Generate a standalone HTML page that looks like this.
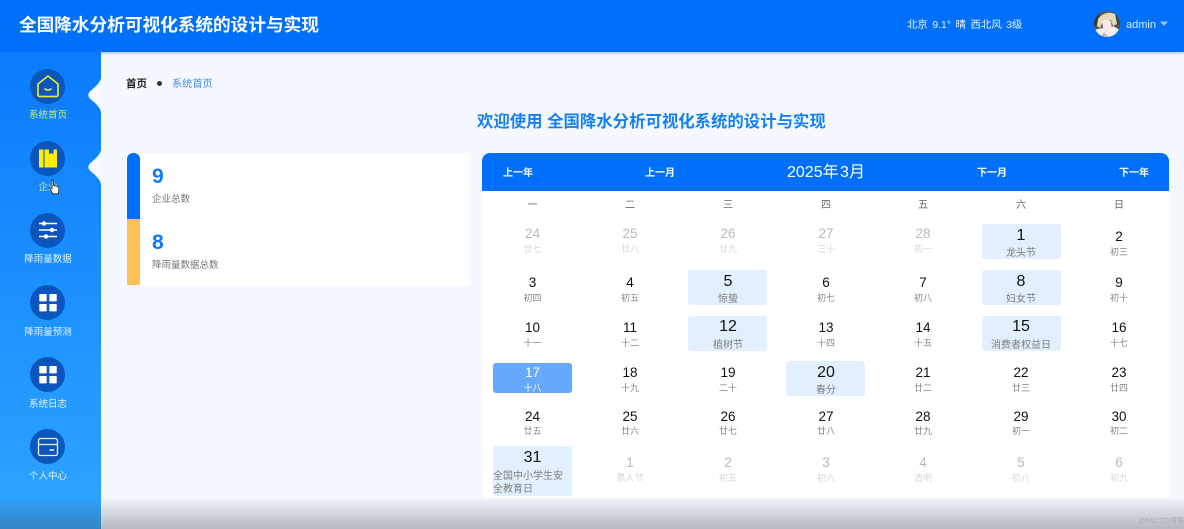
<!DOCTYPE html>
<html lang="zh"><head><meta charset="utf-8"><title>全国降水分析可视化系统的设计与实现</title>
<style>
*{margin:0;padding:0;box-sizing:border-box}
html,body{width:1184px;height:529px;overflow:hidden;background:#f5f9ff}
body{position:relative;font-family:"Liberation Sans","Noto Sans CJK SC",sans-serif;filter:blur(.35px)}
div,span,svg{position:absolute}
.hd{left:0;top:0;width:1184px;height:52px;background:#0070fb;box-shadow:0 1px 3px rgba(0,60,140,.35)}
.side{left:0;top:52px;width:101px;height:477px;background:linear-gradient(180deg,#0a7bfd,#2fa5ff)}
.ci{left:30px;width:35px;height:35px;border-radius:50%;background:#0a56bd}
.lb{left:0;width:96px;margin-top:2px;text-align:center;font-size:9.5px;line-height:14px;color:#e4f1ff;white-space:nowrap}
.n,.s,.w,.b{width:80px;text-align:center;white-space:nowrap}
.n{font-size:13.5px;line-height:20px;color:#111;margin-top:.5px}
.s{font-size:9px;line-height:14px;color:#858585;margin-top:.6px}
.w{font-size:10px;line-height:14px;color:#666;top:199px}
.g{color:#b9b9b9}.sg{color:#d6d6d6}
.big{font-size:16px;margin-top:1px}.hs{color:#7d7d7d;font-size:10px;margin-top:1.7px}
.b{background:#e2effe;border-radius:3px;width:79px;height:35px}
.c1{left:492.5px}.c2{left:590px}.c3{left:688px}.c4{left:786px}.c5{left:883px}.c6{left:981px}.c7{left:1079px}
.nav{top:166px;font-size:10px;line-height:16px;font-weight:700;color:#fff;white-space:nowrap}
</style></head><body>

<div class="hd"></div>
<span style="left:19px;top:12px;font-size:17.65px;line-height:26px;font-weight:700;color:#fff;white-space:nowrap">全国降水分析可视化系统的设计与实现</span>
<span style="left:907px;top:18px;font-size:10.4px;line-height:15px;color:#e8f2ff;white-space:pre;word-spacing:-.6px">北京  9.1°  晴  西北风  3级</span>
<svg style="left:1094px;top:11px" width="26" height="26" viewBox="0 0 26 26"><defs><clipPath id="av"><circle cx="13" cy="13" r="13"/></clipPath></defs><g clip-path="url(#av)"><rect width="26" height="26" fill="#5b5250"/><path d="M0 0h6L3 12 0 17z" fill="#3a3532"/><path d="M21 0h5v15l-4-3z" fill="#4a4542"/><path d="M4 8Q11-1 21 3L23 13 19 15 17 9 9 10 6 17 3 15z" fill="#e4d9bd"/><path d="M8 10Q14 8 17 10L18 18 13 21 9 18z" fill="#f5ebe2"/><path d="M0 26V19L8 17 13 21 19 15 26 19V26z" fill="#f0eff3"/><path d="M10 21l5 5H7z" fill="#c9b8c4"/></g></svg>
<span style="left:1126px;top:17px;font-size:11px;line-height:16px;color:#dcebff">admin</span>
<svg style="left:1160px;top:21px" width="8" height="6"><path d="M0 .5h8L4 5z" fill="#9fc8ff"/></svg>

<div class="side"></div>
<svg style="left:86px;top:78px" width="15" height="34" viewBox="0 0 15 34"><path d="M15 0C14 5 9 9 5 12.500C1.500 15 1.500 19 5 21.500C9 25 14 29 15 34z" fill="#f8fbff"/></svg>
<svg style="left:86px;top:150px" width="15" height="34" viewBox="0 0 15 34"><path d="M15 0C14 5 9 9 5 12.500C1.500 15 1.500 19 5 21.500C9 25 14 29 15 34z" fill="#f8fbff"/></svg>

<div class="ci" style="top:68.5px"></div>
<svg style="left:30px;top:68.5px" width="35" height="35" viewBox="0 0 35 35" fill="none" stroke="#e2ec2e" stroke-width="1.700"><path d="M18 7 8 15V26a1.500 1.500 0 0 0 1.500 1.500h17A1.500 1.500 0 0 0 28 26V15z" stroke-linejoin="round"/><path d="M15 20q3 2 6 0" stroke-linecap="round"/></svg>
<div class="lb" style="top:107px;color:#cdee66">系统首页</div>

<div class="ci" style="top:140.5px"></div>
<svg style="left:30px;top:140.5px" width="35" height="35" viewBox="0 0 35 35"><path d="M9 8.500h4.500v18H9zM14.500 8.500H19V13.500l2.200-1.600L23.500 13.500V8.500H27v18H14.500z" fill="#ffee00"/></svg>
<div class="lb" style="top:179px;color:#cdee66">企业</div>

<div class="ci" style="top:212.5px"></div>
<svg style="left:30px;top:212.500px" width="35" height="35" viewBox="0 0 35 35" stroke="#fff" stroke-width="1.600" fill="#fff"><path d="M9 10.500h18M9 17h18M9 23.500h18"/><circle cx="14" cy="10.500" r="1.400"/><circle cx="22" cy="17" r="1.400"/><circle cx="16" cy="23.500" r="1.400"/></svg>
<div class="lb" style="top:251px">降雨量数据</div>

<div class="ci" style="top:284.5px"></div>
<svg style="left:30px;top:284.500px" width="35" height="35" viewBox="0 0 35 35" fill="#fff"><rect x="9.300" y="9" width="7.400" height="7.400" rx=".6"/><rect x="19.300" y="9" width="7.400" height="7.400" rx=".6"/><rect x="9.300" y="19" width="7.400" height="7.400" rx=".6"/><rect x="19.300" y="19" width="7.400" height="7.400" rx=".6"/></svg>
<div class="lb" style="top:324px">降雨量预测</div>

<div class="ci" style="top:356.5px"></div>
<svg style="left:30px;top:356.500px" width="35" height="35" viewBox="0 0 35 35" fill="#fff"><rect x="9.300" y="9" width="7.400" height="7.400" rx=".6"/><rect x="19.300" y="9" width="7.400" height="7.400" rx=".6"/><rect x="9.300" y="19" width="7.400" height="7.400" rx=".6"/><rect x="19.300" y="19" width="7.400" height="7.400" rx=".6"/></svg>
<div class="lb" style="top:396px">系统日志</div>

<div class="ci" style="top:428.5px"></div>
<svg style="left:30px;top:428.500px" width="35" height="35" viewBox="0 0 35 35" fill="none" stroke="#e8f2ff" stroke-width="1.300"><rect x="8.500" y="9.500" width="19" height="17" rx="2"/><path d="M8.500 15.500h19"/><path d="M19.500 21h4.500" stroke-width="1.500"/></svg>
<div class="lb" style="top:468px">个人中心</div>

<svg style="left:49px;top:179px" width="11" height="16" viewBox="0 0 11 16"><path d="M2.500 1.200C3.400.4 4.300 1 4.300 2V6.500L8.800 7.500C9.800 7.900 10 8.800 9.900 10L9.200 14.800H3.800L1 9.600C.7 8.800 1.500 8.200 2.400 9L3 9.800V2z" fill="#fff" stroke="#222" stroke-width=".8"/></svg>

<span style="left:126px;top:76px;font-size:10.500px;line-height:16px;font-weight:700;color:#222">首页</span>
<div style="left:157px;top:81px;width:5px;height:5px;border-radius:50%;background:#333"></div>
<span style="left:172px;top:77px;font-size:10.200px;line-height:16px;color:#3f8de0">系统首页</span>

<span style="left:477px;top:110px;font-size:16.400px;line-height:24px;font-weight:700;color:#1480f5;white-space:nowrap">欢迎使用 全国降水分析可视化系统的设计与实现</span>

<div style="left:127px;top:153px;width:343px;height:133px;background:#fff"></div>
<div style="left:127px;top:153px;width:12.500px;height:66px;background:#0070fb;border-radius:6px 6px 0 0"></div>
<div style="left:127px;top:219px;width:12.500px;height:66px;background:#fdc155"></div>
<span style="left:152px;top:163px;font-size:21px;line-height:28px;font-weight:700;color:#0f7af5">9</span>
<span style="left:152px;top:192px;font-size:9.500px;line-height:15px;color:#777">企业总数</span>
<span style="left:152px;top:229px;font-size:21px;line-height:28px;font-weight:700;color:#0f7af5">8</span>
<span style="left:152px;top:258px;font-size:9.500px;line-height:15px;color:#777">降雨量数据总数</span>

<div style="left:482px;top:153px;width:687px;height:346px;background:#fff;border-radius:8px 8px 0 0"></div>
<div style="left:482px;top:153px;width:687px;height:38px;background:#0070fb;border-radius:8px 8px 0 0"></div>
<span class="nav" style="left:503px">上一年</span>
<span class="nav" style="left:645px">上一月</span>
<span style="left:787px;top:161px;font-size:16px;line-height:24px;color:#fff;white-space:nowrap;word-spacing:-3px">2025年 3月</span>
<span class="nav" style="left:977px">下一月</span>
<span class="nav" style="left:1119px">下一年</span>

<div class="w c1">一</div><div class="w c2">二</div><div class="w c3">三</div><div class="w c4">四</div><div class="w c5">五</div><div class="w c6">六</div><div class="w c7">日</div>

<!-- highlight boxes -->
<div class="b" style="left:982px;top:224px"></div>
<div class="b" style="left:688px;top:270px"></div>
<div class="b" style="left:982px;top:270px"></div>
<div class="b" style="left:688px;top:316px"></div>
<div class="b" style="left:982px;top:316px"></div>
<div class="b" style="left:493px;top:363px;height:30px;background:#66a9fc"></div>
<div class="b" style="left:786px;top:361px"></div>
<div class="b" style="left:493px;top:446px;height:50px"></div>

<!-- row 1 -->
<div class="n g c1" style="top:223px">24</div><div class="s sg c1" style="top:241px">廿七</div>
<div class="n g c2" style="top:223px">25</div><div class="s sg c2" style="top:241px">廿八</div>
<div class="n g c3" style="top:223px">26</div><div class="s sg c3" style="top:241px">廿九</div>
<div class="n g c4" style="top:223px">27</div><div class="s sg c4" style="top:241px">三十</div>
<div class="n g c5" style="top:223px">28</div><div class="s sg c5" style="top:241px">初一</div>
<div class="n big c6" style="top:225px">1</div><div class="s hs c6" style="top:245px">龙头节</div>
<div class="n c7" style="top:226px">2</div><div class="s c7" style="top:244px">初三</div>
<!-- row 2 -->
<div class="n c1" style="top:272px">3</div><div class="s c1" style="top:290px">初四</div>
<div class="n c2" style="top:272px">4</div><div class="s c2" style="top:290px">初五</div>
<div class="n big c3" style="top:271px">5</div><div class="s hs c3" style="top:291px">惊蛰</div>
<div class="n c4" style="top:272px">6</div><div class="s c4" style="top:290px">初七</div>
<div class="n c5" style="top:272px">7</div><div class="s c5" style="top:290px">初八</div>
<div class="n big c6" style="top:271px">8</div><div class="s hs c6" style="top:291px">妇女节</div>
<div class="n c7" style="top:272px">9</div><div class="s c7" style="top:290px">初十</div>
<!-- row 3 -->
<div class="n c1" style="top:317px">10</div><div class="s c1" style="top:335px">十一</div>
<div class="n c2" style="top:317px">11</div><div class="s c2" style="top:335px">十二</div>
<div class="n big c3" style="top:316px">12</div><div class="s hs c3" style="top:337px">植树节</div>
<div class="n c4" style="top:317px">13</div><div class="s c4" style="top:335px">十四</div>
<div class="n c5" style="top:317px">14</div><div class="s c5" style="top:335px">十五</div>
<div class="n big c6" style="top:316px">15</div><div class="s hs c6" style="top:337px">消费者权益日</div>
<div class="n c7" style="top:317px">16</div><div class="s c7" style="top:335px">十七</div>
<!-- row 4 -->
<div class="n c1" style="top:362px;color:#fff">17</div><div class="s c1" style="top:380px;color:#fff">十八</div>
<div class="n c2" style="top:362px">18</div><div class="s c2" style="top:380px">十九</div>
<div class="n c3" style="top:362px">19</div><div class="s c3" style="top:380px">二十</div>
<div class="n big c4" style="top:362px">20</div><div class="s hs c4" style="top:382px">春分</div>
<div class="n c5" style="top:362px">21</div><div class="s c5" style="top:380px">廿二</div>
<div class="n c6" style="top:362px">22</div><div class="s c6" style="top:380px">廿三</div>
<div class="n c7" style="top:362px">23</div><div class="s c7" style="top:380px">廿四</div>
<!-- row 5 -->
<div class="n c1" style="top:406px">24</div><div class="s c1" style="top:423px">廿五</div>
<div class="n c2" style="top:406px">25</div><div class="s c2" style="top:423px">廿六</div>
<div class="n c3" style="top:406px">26</div><div class="s c3" style="top:423px">廿七</div>
<div class="n c4" style="top:406px">27</div><div class="s c4" style="top:423px">廿八</div>
<div class="n c5" style="top:406px">28</div><div class="s c5" style="top:423px">廿九</div>
<div class="n c6" style="top:406px">29</div><div class="s c6" style="top:423px">初一</div>
<div class="n c7" style="top:406px">30</div><div class="s c7" style="top:423px">初二</div>
<!-- row 6 -->
<div class="n big c1" style="top:447px">31</div>
<div class="s hs" style="left:493px;top:468px;width:79px;text-align:left">全国中小学生安</div>
<div class="s hs" style="left:493px;top:481px;width:79px;text-align:left">全教育日</div>
<div class="n g c2" style="top:452px">1</div><div class="s sg c2" style="top:470px">愚人节</div>
<div class="n g c3" style="top:452px">2</div><div class="s sg c3" style="top:470px">初五</div>
<div class="n g c4" style="top:452px">3</div><div class="s sg c4" style="top:470px">初六</div>
<div class="n g c5" style="top:452px">4</div><div class="s sg c5" style="top:470px">清明</div>
<div class="n g c6" style="top:452px">5</div><div class="s sg c6" style="top:470px">初八</div>
<div class="n g c7" style="top:452px">6</div><div class="s sg c7" style="top:470px">初九</div>

<div style="left:0;top:496px;width:1184px;height:33px;background:linear-gradient(180deg,rgba(70,72,80,0),rgba(70,72,80,.36))"></div>
<span style="left:1138px;top:515px;font-size:7.500px;line-height:12px;color:#a8abb0;white-space:nowrap">@51CTO博客</span>
</body></html>
